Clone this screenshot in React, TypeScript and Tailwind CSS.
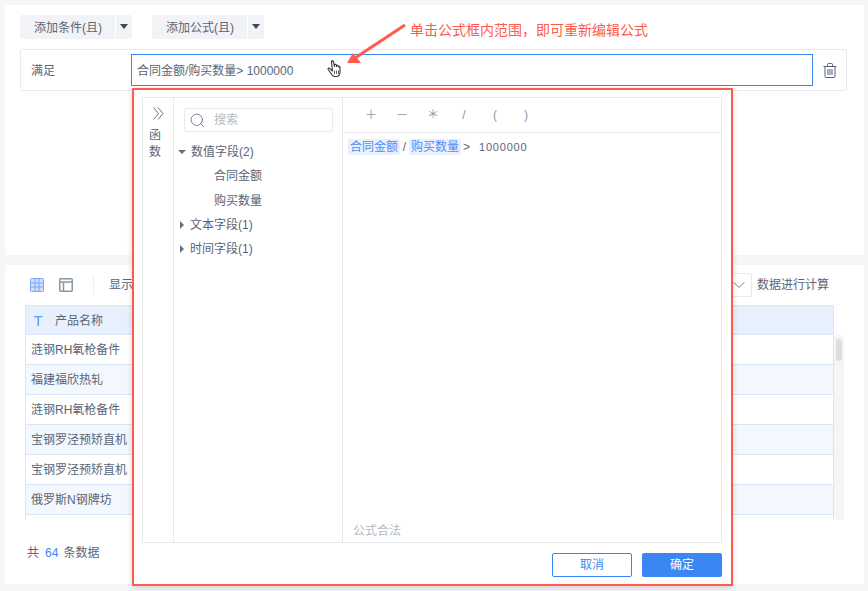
import { ChevronDown, Search } from "lucide-react";

const rows = [
  "涟钢RH氧枪备件",
  "福建福欣热轧",
  "涟钢RH氧枪备件",
  "宝钢罗泾预矫直机",
  "宝钢罗泾预矫直机",
  "俄罗斯N钢牌坊",
];

function SplitButton({ label }: { label: string }) {
  return (
    <div className="flex h-6 gap-px">
      <button className="h-6 w-[95px] rounded-l-[2px] bg-[#f1f3f6] pt-[2px] pl-px text-xs text-[#5b6475]">{label}</button>
      <button className="flex h-6 w-4 items-center justify-center rounded-r-[2px] bg-[#f1f3f6] pb-[2px]">
        <span className="h-0 w-0 border-x-4 border-t-[5px] border-x-transparent border-t-[#3d4759]" />
      </button>
    </div>
  );
}

function Caret({ open }: { open?: boolean }) {
  return open ? (
    <span className="h-0 w-0 border-x-4 border-t-[4px] border-x-transparent border-t-[#667085]" />
  ) : (
    <span className="mx-[2px] h-0 w-0 border-y-4 border-l-[4px] border-y-transparent border-l-[#667085]" />
  );
}

function TrashIcon() {
  return (
    <svg width="14" height="15" viewBox="0 0 14 15" fill="none" stroke="#55607a" strokeWidth="1">
      <path d="M0.5 3.5h13M4.5 3V1.5c0-.6.4-1 1-1h3c.6 0 1 .4 1 1V3" />
      <path d="M2 4v9.5c0 .6.4 1 1 1h8c.6 0 1-.4 1-1V4" />
      <path d="M5 6v6M7 6v6M9 6v6" />
    </svg>
  );
}

function HandCursor() {
  return (
    <svg width="16" height="18" viewBox="0 0 16 18">
      <path
        d="M4.500 1.800c0-1.200 1.800-1.200 2 0l1 4.700V5c0-1.100 1.700-1.100 1.800 0l.2 1.500V6c0-1 1.600-1 1.700 0l.2 1V7c0-1 1.600-.9 1.600.2V12c0 2.500-1.300 4.500-3.800 4.500H8c-1.500 0-2.500-.8-3.300-2L1.200 9.500c-.6-1 .6-1.900 1.500-1.100l2.800 2.600z"
        fill="#fff"
        stroke="#333"
        strokeWidth="1.100"
        strokeLinejoin="round"
      />
      <path d="M7.500 10.500v3.500M9.500 10.500v3.500M11.500 10.500v3.500" stroke="#333" strokeWidth="0.800" />
    </svg>
  );
}

function GridIcon() {
  return (
    <svg width="14" height="14" viewBox="0 0 14 14" fill="#cfe0fc" stroke="#7ba7f5" strokeWidth="1">
      <rect x="0.5" y="0.5" width="13" height="13" rx="1" />
      <path d="M0.500 5h13M0.500 9h13M5 0.500v13M9 0.500v13" />
    </svg>
  );
}

function LayoutIcon() {
  return (
    <svg width="14" height="14" viewBox="0 0 14 14" fill="none" stroke="#8c95a5" strokeWidth="1.500">
      <rect x="0.750" y="0.750" width="12.500" height="12.500" rx="1" />
      <path d="M0.750 4h12.500M4.500 4v9.250" />
    </svg>
  );
}

function CollapseIcon() {
  return (
    <svg width="11" height="13" viewBox="0 0 11 13" fill="none" stroke="#667085" strokeWidth="1">
      <path d="M0.500 0.500 5.500 6.500 0.500 12.500M5 0.500 10 6.500 5 12.500" />
    </svg>
  );
}

function Token({ children }: { children: string }) {
  return <span className="flex h-4 w-[52px] items-center justify-center rounded-[2px] bg-[#e9f0fd] text-[#4d8df5]">{children}</span>;
}

function FormulaPopup() {
  return (
    <div className="absolute left-[132px] top-[88px] flex h-[498px] w-[601px] flex-col border-2 border-[#ff5a4c] bg-white pl-2 pt-[7px] shadow-[0_2px_6px_rgba(0,0,0,0.15)]">
      <div className="flex h-[446px] w-[580px] border border-[#e8eaed] bg-white">
        <div className="flex w-[31px] shrink-0 flex-col border-r border-[#e8eaed] pl-[6px] pt-[9px] text-xs leading-[17px] text-[#5b6475]">
          <span className="mb-[6px] ml-[4px] flex">
            <CollapseIcon />
          </span>
          <span className="pt-px">函</span>
          <span>数</span>
        </div>
        <div className="w-[169px] shrink-0 border-r border-[#e8eaed] pl-[4px] pt-[10px] text-xs text-[#5b6475]">
          <div className="ml-[6px] flex h-6 w-[149px] items-center gap-[8px] rounded-[2px] border border-[#e8eaed] pl-[4px] text-[#b4bac4]">
            <Search size={17} strokeWidth={1.1} className="text-[#55607a]" />
            <span>搜索</span>
          </div>
          <div className="mt-[8px] flex h-6 items-center gap-[5px] whitespace-nowrap">
            <Caret open />
            <span>数值字段(2)</span>
          </div>
          <div className="flex h-6 items-center pl-[36px]">合同金额</div>
          <div className="mt-px flex h-6 items-center pl-[36px]">购买数量</div>
          <div className="flex h-6 items-center gap-[4px]">
            <Caret />
            <span>文本字段(1)</span>
          </div>
          <div className="flex h-6 items-center gap-[4px]">
            <Caret />
            <span>时间字段(1)</span>
          </div>
        </div>
        <div className="flex min-w-0 flex-1 flex-col">
          <div className="flex h-[35px] shrink-0 items-center gap-[17px] border-b border-[#e8eaed] pl-[21px] text-[#8c95a5]">
            <span className="w-[14px] text-center">＋</span>
            <span className="w-[14px] text-center">－</span>
            <span className="w-[14px] text-center">＊</span>
            <span className="w-[14px] text-center">/</span>
            <span className="w-[14px] text-center">(</span>
            <span className="w-[14px] text-center">)</span>
          </div>
          <div className="flex flex-1 items-start pl-[5px] pt-[6px] text-xs text-[#5b6475]">
            <Token>合同金额</Token>
            <span className="flex h-4 w-[9px] items-center justify-center">/</span>
            <Token>购买数量</Token>
            <span className="ml-[2px] flex h-4 items-center">&gt;</span>
            <span className="ml-[9px] flex h-4 items-center text-[11px] tracking-[0.8px]">1000000</span>
          </div>
          <div className="pb-[3px] pl-[10px] text-xs text-[#b4bac4]">公式合法</div>
        </div>
      </div>
      <div className="mt-[10px] flex w-[580px] justify-end gap-[10px] text-xs">
        <button className="h-6 w-20 rounded-[2px] border border-[#3b86f2] bg-white text-[#3b86f2]">取消</button>
        <button className="h-6 w-20 rounded-[2px] bg-[#3b86f2] text-white">确定</button>
      </div>
    </div>
  );
}

export default function App() {
  return (
    <div
      className="relative h-[591px] w-[868px] overflow-hidden bg-[#f5f6f8] pl-[5px] pr-[4px] pt-[5px] text-xs text-[#5b6475]"
      style={{ fontFamily: '"Liberation Sans", "Noto Sans CJK SC", sans-serif' }}
    >
      <section className="h-[250px] bg-white pl-[15px] pr-[17px] pt-[10px]">
        <div className="flex gap-[20px]">
          <SplitButton label="添加条件(且)" />
          <SplitButton label="添加公式(且)" />
        </div>
        <div className="mt-[10px] flex h-[42px] items-center rounded-[2px] border border-[#e8eaed] pl-[10px]">
          <span className="w-[100px] shrink-0 pt-px">满足</span>
          <div className="flex h-8 w-[682px] shrink-0 items-center border border-[#3b86f2] pl-[5px] pt-[2px]">
            合同金额/购买数量&gt; 1000000
          </div>
          <div className="ml-[10px]">
            <TrashIcon />
          </div>
        </div>
      </section>
      <section className="relative mt-[10px] h-[319px] bg-white pl-[20px] pr-[20px]">
        <div className="flex h-[40px] items-center pl-[5px]">
          <GridIcon />
          <span className="ml-[15px]">
            <LayoutIcon />
          </span>
          <span className="ml-[20px] h-5 w-px bg-[#eceef1]" />
          <span className="ml-[15px]">显示</span>
          <div className="ml-auto mr-[5px] flex h-6 w-[80px] items-center justify-end rounded-[2px] border border-[#e8eaed] pr-[2px]">
            <ChevronDown size={20} strokeWidth={1} className="text-[#55607a]" />
          </div>
          <span className="mr-[15px]">数据进行计算</span>
        </div>
        <div className="flex">
          <div className="h-[215px] w-[809px] overflow-hidden border-x border-[#d8e5fb]">
            <div className="flex h-[30px] items-center gap-[12px] border-y border-[#d8e5fb] bg-[#e9f0fd] pl-[7px] pt-px">
              <span className="w-[10px] text-center text-[15px] font-light text-[#5a9bf6]">T</span>
              <span>产品名称</span>
            </div>
            {rows.map((name, i) => (
              <div
                key={i}
                className={`flex h-[30px] items-center border-b border-[#d8e5fb] pl-[5px] ${
                  i % 2 === 1 ? "bg-[#f3f7fe]" : "bg-white"
                }`}
              >
                {name}
              </div>
            ))}
          </div>
          <div className="mt-[30px] h-[185px] w-[10px] rounded bg-[#f5f5f5] px-[2px] pt-[4px]">
            <div className="h-[22px] rounded bg-[#dcdee1]" />
          </div>
        </div>
        <div className="ml-[2px] mt-[25px]">
          共<span className="ml-[6px] mr-[5px] text-[#3b86f2]">64</span>条数据
        </div>
      </section>

      <FormulaPopup />

      <div className="absolute left-[410px] top-[20px] text-sm leading-[20px] text-[#ff5a4c]">
        单击公式框内范围，即可重新编辑公式
      </div>
      <svg className="absolute left-[340px] top-[20px]" width="70" height="50" viewBox="0 0 70 50">
        <path d="M65 5 L15 38" stroke="#ff5a4c" strokeWidth="3" />
        <path d="M7 43 L13 33 L21 43 Z" fill="#ff5a4c" />
      </svg>
      <div className="absolute left-[327px] top-[60px]">
        <HandCursor />
      </div>
    </div>
  );
}
